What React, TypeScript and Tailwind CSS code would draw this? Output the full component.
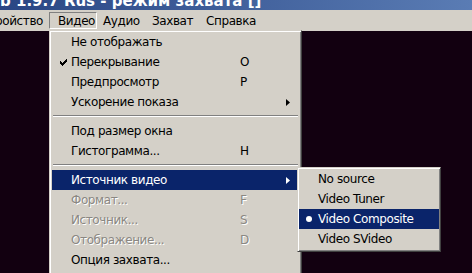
const font = { fontFamily: '"DejaVu Sans", Verdana, sans-serif' };

type Item =
  | { sep: true }
  | { label: string; key?: string; check?: boolean; arrow?: boolean; disabled?: boolean; active?: boolean };

const items: Item[] = [
  { label: "Не отображать" },
  { label: "Перекрывание", key: "O", check: true },
  { label: "Предпросмотр", key: "P" },
  { label: "Ускорение показа", arrow: true },
  { sep: true },
  { label: "Под размер окна" },
  { label: "Гистограмма...", key: "H" },
  { sep: true },
  { label: "Источник видео", arrow: true, active: true },
  { label: "Формат...", key: "F", disabled: true },
  { label: "Источник...", key: "S", disabled: true },
  { label: "Отображение...", key: "D", disabled: true },
  { label: "Опция захвата..." },
];

const sources = ["No source", "Video Tuner", "Video Composite", "Video SVideo"];

function Arrow({ white }: { white?: boolean }) {
  return (
    <svg width="4" height="7" viewBox="0 0 4 7" className="block">
      <path d="M0 0 L4 3.5 L0 7 Z" fill={white ? "#fff" : "#000"} />
    </svg>
  );
}

function Check() {
  return (
    <svg width="7" height="7" viewBox="0 0 7 7" className="block" shapeRendering="crispEdges">
      <path d="M0 2h1v1h1v1h1v-1h1v-1h1v-1h1v-1h1v3h-1v1h-1v1h-1v1h-1v1h-1v-1h-1v-1h-1z" fill="#000" />
    </svg>
  );
}

function MenuRow({ it }: { it: Exclude<Item, { sep: true }> }) {
  const color = it.active ? "text-white" : it.disabled ? "text-[#8a8782]" : "text-black";
  const shadow = it.disabled ? { textShadow: "1px 1px 0 #ffffff" } : undefined;
  return (
    <div className={`flex items-center h-[20px] ${it.active ? "bg-[#0a246a]" : ""} ${color}`}>
      <div className="w-[19px] flex justify-center pl-[4px]">{it.check && <Check />}</div>
      <div className="w-[169px] whitespace-nowrap" style={shadow}>{it.label}</div>
      <div className="w-[40px]" style={shadow}>{it.key}</div>
      <div className="flex-1 flex justify-end pr-[9px]">{it.arrow && <Arrow white={it.active} />}</div>
    </div>
  );
}

export default function App() {
  return (
    <div className="w-[472px] h-[273px] overflow-hidden relative bg-[#120010] text-[12px] tracking-[-0.4px] leading-none" style={font}>
      <div className="h-[10px] overflow-hidden bg-gradient-to-r from-[#2a4684] to-[#5a7cb4]">
        <div className="-mt-[6px] text-white font-bold text-[15px] whitespace-nowrap tracking-normal">
          b 1.9.7 Rus - режим захвата []
        </div>
      </div>
      <div className="h-[21px] bg-[#d4d0c8] flex items-center text-black">
        <div className="w-[49px] whitespace-nowrap overflow-hidden flex justify-end pr-[6px]">ройство</div>
        <div className="h-[17px] w-[48px] flex items-center pl-[8px] border border-t-[#808080] border-l-[#808080] border-r-white border-b-white">Видео</div>
        <div className="ml-[6px] w-[49px]">Аудио</div>
        <div className="w-[54px]">Захват</div>
        <div>Справка</div>
      </div>

      <div className="absolute left-[49px] top-[30px] w-[253px] h-[260px] bg-[#d4d0c8] border border-t-[#d4d0c8] border-l-[#d4d0c8] border-r-[#404040] border-b-[#404040] shadow-[inset_1px_1px_0_#fff,inset_-1px_-1px_0_#808080] px-[2px] pt-[1px]">
        {items.map((it, i) =>
          "sep" in it ? (
            <div key={i} className="h-[9px] pt-[3px] px-[1px]">
              <div className="h-[1px] bg-[#808080]" />
              <div className="h-[1px] bg-white" />
            </div>
          ) : (
            <MenuRow key={i} it={it} />
          )
        )}
      </div>

      <div className="absolute left-[297px] top-[167px] w-[144px] h-[85px] bg-[#d4d0c8] border border-t-[#d4d0c8] border-l-[#d4d0c8] border-r-[#404040] border-b-[#404040] shadow-[inset_1px_1px_0_#fff,inset_-1px_-1px_0_#808080] px-[1px] pt-[1px]">
        {sources.map((s) => {
          const on = s === "Video Composite";
          return (
            <div key={s} className={`flex items-center h-[20px] ${on ? "bg-[#0a246a] text-white" : "text-black"}`}>
              <div className="w-[19px] flex justify-center">
                {on && <div className="w-[6px] h-[6px] rounded-full bg-white" />}
              </div>
              <div className="whitespace-nowrap">{s}</div>
            </div>
          );
        })}
      </div>
    </div>
  );
}
